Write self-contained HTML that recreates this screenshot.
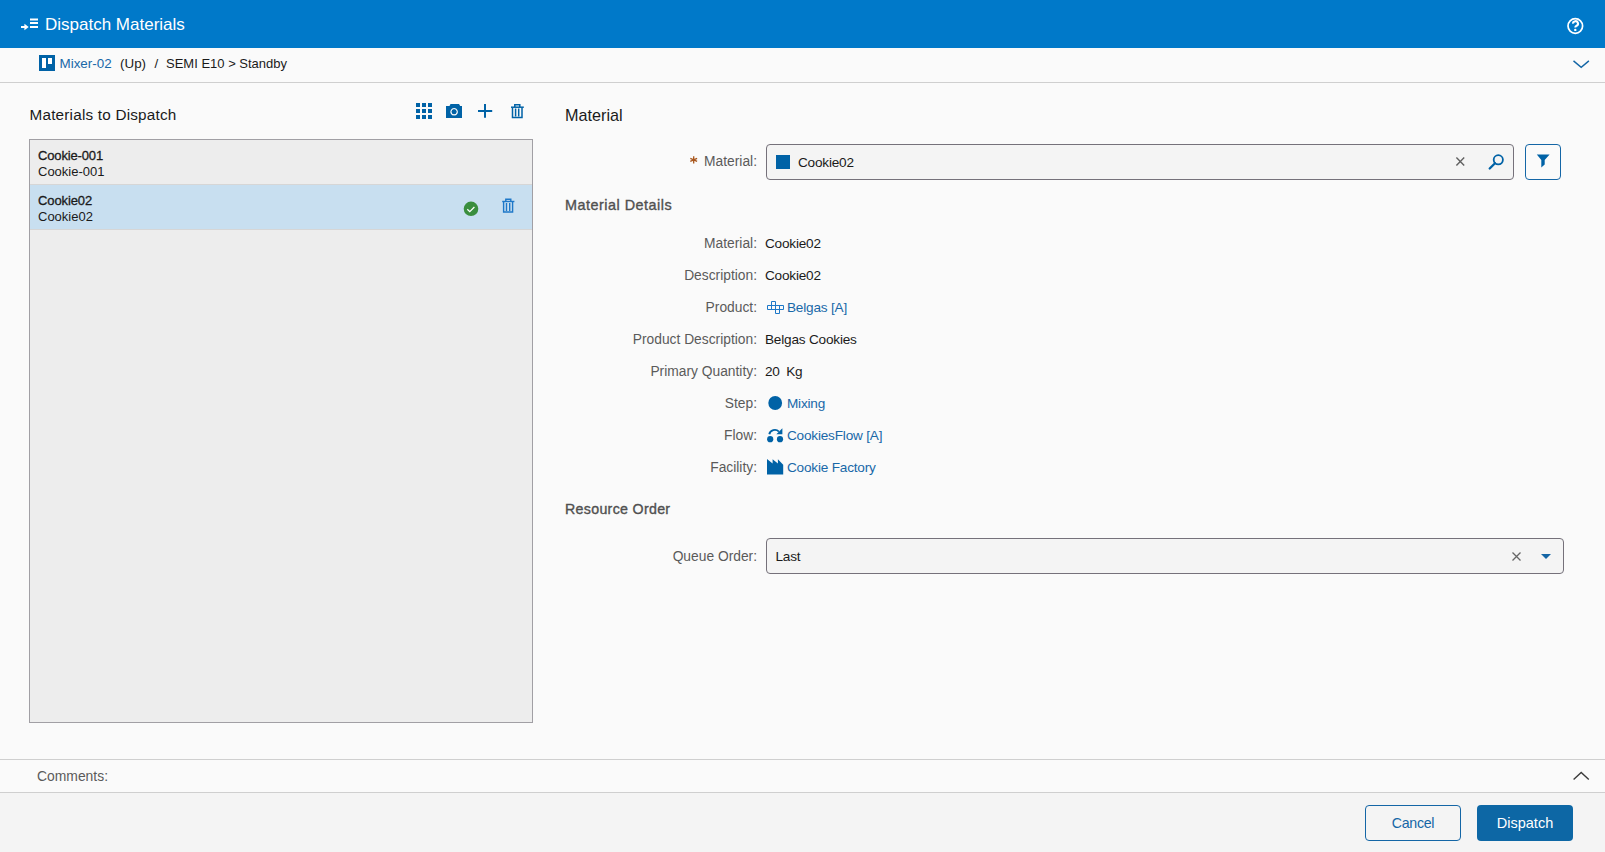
<!DOCTYPE html>
<html><head><meta charset="utf-8">
<style>
*{box-sizing:border-box;margin:0;padding:0}
html,body{width:1605px;height:852px;overflow:hidden;background:#fafafa;font-family:"Liberation Sans",sans-serif;color:#1a1a1a}
.a{position:absolute}
.t{position:absolute;line-height:1;white-space:nowrap}
.r{text-align:right}
svg{position:absolute;overflow:visible}
#hdr{left:0;top:0;width:1605px;height:48px;background:#0079c9}
#bc{left:0;top:48px;width:1605px;height:35px;background:#fafafa;border-bottom:1px solid #cfcfcf}
.lbl{font-size:13.8px;color:#5a5a5a}
.val{font-size:13.6px;letter-spacing:-0.2px;color:#1a1a1a}
.lnk{font-size:13.6px;letter-spacing:-0.2px;color:#1868a8}
.ib{fill:#0062a6}
</style></head><body>

<!-- header -->
<div id="hdr" class="a"></div>
<svg style="left:0;top:0" width="1605" height="48">
  <g fill="#fff">
    <rect x="30" y="18.5" width="8" height="2"/>
    <rect x="30" y="22" width="8" height="2"/>
    <rect x="30" y="26" width="8" height="2"/>
    <path d="M21 25.9h3.4v-2.1l4.3 3.2-4.3 3.2v-2.1H21z"/>
  </g>
  <circle cx="1575.3" cy="26" r="7.3" fill="none" stroke="#fff" stroke-width="1.7"/>
  <path d="M1573 23.6a2.5 2.4 0 1 1 3.6 2.1c-.9.5-1.3 1-1.3 1.9" fill="none" stroke="#fff" stroke-width="2.1"/>
  <circle cx="1575.3" cy="29.9" r="1.2" fill="#fff"/>
</svg>
<div class="t" style="left:45px;top:15.6px;font-size:17px;color:#fff">Dispatch Materials</div>

<!-- breadcrumb -->
<div id="bc" class="a"></div>
<svg style="left:0;top:0" width="1605" height="90">
  <rect x="39" y="55" width="16" height="16" fill="#0062a6"/>
  <rect x="42" y="58" width="4" height="10" fill="#fff"/>
  <rect x="48" y="58" width="4" height="6" fill="#fff"/>
  <path d="M1573.5 60.9l7.7 6.5 7.7-6.5" fill="none" stroke="#1466a6" stroke-width="1.4"/>
</svg>
<div class="t lnk" style="left:59.5px;top:56.6px;font-size:13.4px;letter-spacing:0">Mixer-02</div>
<div class="t val" style="left:120px;top:57px;font-size:13.4px;letter-spacing:0">(Up)</div>
<div class="t val" style="left:154.5px;top:57px;font-size:13.4px;letter-spacing:0">/</div>
<div class="t val" style="left:166px;top:57px;font-size:13px;letter-spacing:0">SEMI E10 &gt; Standby</div>


<!-- left panel -->
<div class="t" style="left:29.5px;top:107.1px;font-size:15.3px;letter-spacing:0.2px;color:#1a1a1a">Materials to Dispatch</div>
<svg style="left:0;top:0" width="560" height="240">
  <g class="ib">
    <rect x="416" y="103" width="4" height="4"/><rect x="422" y="103" width="4" height="4"/><rect x="428" y="103" width="4" height="4"/>
    <rect x="416" y="109" width="4" height="4"/><rect x="422" y="109" width="4" height="4"/><rect x="428" y="109" width="4" height="4"/>
    <rect x="416" y="115" width="4" height="4"/><rect x="422" y="115" width="4" height="4"/><rect x="428" y="115" width="4" height="4"/>
  </g>
  <path class="ib" fill-rule="evenodd" d="M446 106h3.5l1-2h8.5l1.2 2h1.8v12h-16z M454.1 108a3.8 3.8 0 1 0 0.01 0z M454.1 109.3a2.5 2.5 0 1 1 -0.01 0z"/>
  <circle cx="454.1" cy="111.8" r="2.3" class="ib"/>
  <path d="M478 111h14.2M485 104v13.8" stroke="#0062a6" stroke-width="2" fill="none"/>
  <g fill="none" stroke="#0062a6" stroke-width="1.5">
    <path d="M511 107.2h12.8"/>
    <path d="M514.8 107v-2.3h5v2.3"/>
    <path d="M512.5 107.5v10h9.5v-10"/>
    <path d="M515.6 108.5v8M518.7 108.5v8"/>
  </g>
</svg>
<div class="a" style="left:29px;top:139px;width:504px;height:584px;background:#ededed;border:1px solid #a19fa4"></div>
<div class="a" style="left:30px;top:184px;width:502px;height:1px;background:#d6d6d6"></div>
<div class="a" style="left:30px;top:185px;width:502px;height:44px;background:#c8dff0"></div>
<div class="a" style="left:30px;top:229px;width:502px;height:1px;background:#d6d6d6"></div>
<div class="t" style="left:38px;top:148.8px;font-size:13px;letter-spacing:-0.15px;-webkit-text-stroke:0.3px #1a1a1a">Cookie-001</div>
<div class="t" style="left:38px;top:165px;font-size:13px">Cookie-001</div>
<div class="t" style="left:38px;top:193.8px;font-size:13px;letter-spacing:-0.1px;-webkit-text-stroke:0.3px #1a1a1a">Cookie02</div>
<div class="t" style="left:38px;top:210px;font-size:13px">Cookie02</div>
<svg style="left:0;top:0" width="560" height="240">
  <circle cx="471" cy="208.8" r="7.3" fill="#3a8e3e"/>
  <path d="M467.3 209.2l2.5 2.4 4.6-4.6" fill="none" stroke="#fff" stroke-width="1.3"/>
  <g fill="none" stroke="#1e78c8" stroke-width="1.4">
    <path d="M502.2 201.5h12.2"/>
    <path d="M505.8 201.3v-2h5v2"/>
    <path d="M503.6 202v10h9v-10"/>
    <path d="M506.5 203v8M509.7 203v8"/>
  </g>
</svg>


<!-- right panel -->
<div class="t" style="left:565px;top:107.4px;font-size:16.2px;color:#1a1a1a">Material</div>
<div class="t lbl r" style="left:557px;width:200px;top:155.30px">Material:</div>
<svg style="left:0;top:0" width="800" height="200"><path d="M693.7 156.3v7.2M690.3 158.4l6.8 3M690.3 161.4l6.8-3" stroke="#a8561c" stroke-width="1.3" fill="none"/></svg>
<div class="a" style="left:766px;top:144px;width:748px;height:36px;background:#f4f4f4;border:1px solid #75717a;border-radius:4px"></div>
<div class="a" style="left:776px;top:155px;width:14px;height:14px;background:#0062a6"></div>
<div class="t val" style="left:798px;top:156px">Cookie02</div>
<div class="a" style="left:1525px;top:144px;width:36px;height:36px;border:1.5px solid #1466a6;border-radius:4px"></div>
<div class="t" style="left:565px;top:197.5px;font-size:14.4px;letter-spacing:0.5px;-webkit-text-stroke:0.35px #505050;color:#505050">Material Details</div>
<div class="t lbl r" style="left:557px;width:200px;top:237.02px">Material:</div>
<div class="t val" style="left:765px;top:236.70px">Cookie02</div>
<div class="t lbl r" style="left:557px;width:200px;top:269.02px">Description:</div>
<div class="t val" style="left:765px;top:268.70px">Cookie02</div>
<div class="t lbl r" style="left:557px;width:200px;top:301.02px">Product:</div>
<div class="t lnk" style="left:787px;top:300.70px">Belgas [A]</div>
<div class="t lbl r" style="left:557px;width:200px;top:333.02px">Product Description:</div>
<div class="t val" style="left:765px;top:332.70px">Belgas Cookies</div>
<div class="t lbl r" style="left:557px;width:200px;top:365.02px">Primary Quantity:</div>
<div class="t val" style="left:765px;top:364.70px">20<span style="margin-left:6.5px">Kg</span></div>
<div class="t lbl r" style="left:557px;width:200px;top:397.02px">Step:</div>
<div class="t lnk" style="left:787px;top:396.70px">Mixing</div>
<div class="t lbl r" style="left:557px;width:200px;top:429.02px">Flow:</div>
<div class="t lnk" style="left:787px;top:428.70px">CookiesFlow [A]</div>
<div class="t lbl r" style="left:557px;width:200px;top:461.02px">Facility:</div>
<div class="t lnk" style="left:787px;top:460.70px">Cookie Factory</div>
<svg style="left:0;top:0" width="1605" height="600">
  <path d="M1456.4 157.6l7.8 7.8M1464.2 157.6l-7.8 7.8" stroke="#606060" stroke-width="1.4" fill="none"/>
  <circle cx="1498.3" cy="159.8" r="4.6" fill="none" stroke="#0062a6" stroke-width="1.8"/>
  <path d="M1495 163.2l-5.3 5.3" stroke="#0062a6" stroke-width="2.3" stroke-linecap="round"/>
  <path class="ib" d="M1536.8 154.6h12.8l-4.9 5.3v4.6l-3.4 3v-7.6z"/>
  <!-- product -->
  <g fill="none" stroke="#1e78c8" stroke-width="1">
    <path d="M767.5 305.5h16v4h-16z M771.5 301.5h4v8h-4z M775.5 305.5h4v8h-4z M779.5 305.5v4"/>
  </g>
  <circle cx="775.2" cy="403" r="6.9" class="ib"/>
  <g class="ib">
    <circle cx="770.2" cy="439.2" r="3.1"/><circle cx="780" cy="439.2" r="3.1"/>
    <path d="M769.3 434.2a5.6 5.2 0 0 1 9.6 -2.6" fill="none" stroke="#0062a6" stroke-width="1.9"/><path d="M776.4 434.2h6v-6z"/>
    <path d="M767 459v15.6h16.2v-9.8l-5.3-5.6v4.2l-5.3-4.2v4.2z"/>
  </g>
</svg>
<div class="t" style="left:565px;top:502.3px;font-size:14.2px;letter-spacing:0.32px;-webkit-text-stroke:0.35px #505050;color:#505050">Resource Order</div>
<div class="t lbl r" style="left:557px;width:200px;top:549.50px">Queue Order:</div>
<div class="a" style="left:766px;top:538px;width:798px;height:36px;background:#f4f4f4;border:1px solid #75717a;border-radius:4px"></div>
<div class="t val" style="left:775.5px;top:550px">Last</div>
<svg style="left:0;top:0" width="1605" height="600">
  <path d="M1512.5 552.5l8 8M1520.5 552.5l-8 8" stroke="#666" stroke-width="1.3" fill="none"/>
  <path d="M1541 554h10l-5 5z" fill="#1466a6"/>
</svg>

<!-- comments + footer -->
<div class="a" style="left:0;top:759px;width:1605px;height:1px;background:#cfcfcf"></div>
<div class="a" style="left:0;top:792px;width:1605px;height:60px;background:#f4f4f4;border-top:1px solid #cfcfcf"></div>
<div class="t" style="left:37px;top:770.2px;font-size:13.9px;color:#5a5a5a">Comments:</div>
<svg style="left:0;top:0" width="1605" height="852">
  <path d="M1573.6 779.4l7.6-6.9 7.6 6.9" fill="none" stroke="#3a3a3a" stroke-width="1.4"/>
</svg>
<div class="a" style="left:1365px;top:805px;width:96px;height:36px;border:1px solid #1466a6;border-radius:4px;background:#f4f4f4"></div>
<div class="t" style="left:1365px;width:96px;text-align:center;top:815.8px;font-size:14.2px;letter-spacing:-0.3px;color:#1466a6">Cancel</div>
<div class="a" style="left:1477px;top:805px;width:96px;height:36px;background:#0d67a5;border-radius:4px"></div>
<div class="t" style="left:1477px;width:96px;text-align:center;top:816px;font-size:14.5px;color:#fff">Dispatch</div>

</body></html>
